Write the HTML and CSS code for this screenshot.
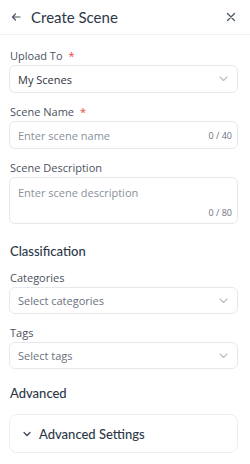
FILE: index.html
```html
<!DOCTYPE html>
<html>
<head>
    <link rel="stylesheet" href="styles.css">
</head>
<body>
    <div class="panel-header">
        <svg class="back-icon" width="10" height="10" viewBox="0 0 10 10"><path d="M9 5H1.5M4.5 2L1.5 5l3 3" fill="none" stroke="#4b5563" stroke-width="1.2" stroke-linecap="round" stroke-linejoin="round"/></svg>
        <h1>Create Scene</h1>
        <svg class="close-icon" width="10" height="10" viewBox="0 0 10 10"><path d="M1.5 1.5l7 7M8.5 1.5l-7 7" fill="none" stroke="#4b5563" stroke-width="1.3" stroke-linecap="round"/></svg>
    </div>
    <div class="form">
        <div class="field">
            <label>Upload To <span class="req">*</span></label>
            <div class="select">
                <span class="value">My Scenes</span>
                <svg class="chev" width="9" height="6" viewBox="0 0 9 6"><path d="M1 1l3.5 3.5L8 1" fill="none" stroke="#b8bdc5" stroke-width="1.1" stroke-linecap="round" stroke-linejoin="round"/></svg>
            </div>
        </div>
        <div class="field">
            <label>Scene Name <span class="req">*</span></label>
            <div class="input">
                <span class="placeholder">Enter scene name</span>
                <span class="counter">0 / 40</span>
            </div>
        </div>
        <div class="field">
            <label>Scene Description</label>
            <div class="textarea">
                <span class="placeholder">Enter scene description</span>
                <span class="counter">0 / 80</span>
            </div>
        </div>

        <h2 class="section-title">Classification</h2>
        <div class="field">
            <label>Categories</label>
            <div class="select small">
                <span class="placeholder">Select categories</span>
                <svg class="chev" width="9" height="6" viewBox="0 0 9 6"><path d="M1 1l3.5 3.5L8 1" fill="none" stroke="#b8bdc5" stroke-width="1.1" stroke-linecap="round" stroke-linejoin="round"/></svg>
            </div>
        </div>
        <div class="field">
            <label>Tags</label>
            <div class="select small">
                <span class="placeholder">Select tags</span>
                <svg class="chev" width="9" height="6" viewBox="0 0 9 6"><path d="M1 1l3.5 3.5L8 1" fill="none" stroke="#b8bdc5" stroke-width="1.1" stroke-linecap="round" stroke-linejoin="round"/></svg>
            </div>
        </div>

        <h2 class="section-title advanced">Advanced</h2>
        <div class="collapse">
            <svg width="8" height="6" viewBox="0 0 8 6"><path d="M1 1.5l3 3 3-3" fill="none" stroke="#374151" stroke-width="1.2" stroke-linecap="round" stroke-linejoin="round"/></svg>
            <span>Advanced Settings</span>
        </div>
    </div>
</body>
</html>
```

FILE: styles.css
```css
body {
    margin: 0;
    font-family: "Open Sans", sans-serif;
    background: #fff;
    color: #374151;
}
.panel-header {
    display: flex;
    align-items: center;
    height: 34px;
    padding: 0 14px 0 11px;
    border-bottom: 1px solid #f0f1f3;
}
.panel-header h1 {
    flex: 1;
    margin: 0 0 0 10px;
    font-family: "Lato", sans-serif;
    font-size: 15px;
    font-weight: 400;
    color: #2d3748;
}
.form {
    padding: 13px 12px 0 9px;
}
.field {
    margin-bottom: 11px;
}
.field label {
    display: block;
    font-size: 11px;
    line-height: 16px;
    margin: 0 0 1px 1px;
    color: #4b5260;
}
.req {
    color: #ef4444;
    margin-left: 3px;
}
.select,
.input {
    display: flex;
    align-items: center;
    height: 28px;
    box-sizing: border-box;
    padding: 0 9px 0 8px;
    border: 1px solid #e6e8eb;
    border-radius: 6px;
    font-size: 11px;
}
.select.small {
    height: 27px;
}
.select .value {
    flex: 1;
    color: #2f3540;
}
.placeholder {
    flex: 1;
    color: #8a919c;
}
.select .placeholder {
    color: #6b7280;
}
.input {
    padding-right: 5px;
}
.counter {
    font-size: 9px;
    color: #6b7280;
}
.textarea {
    display: flex;
    flex-direction: column;
    height: 47px;
    box-sizing: border-box;
    padding: 7px 5px 4px 8px;
    border: 1px solid #e6e8eb;
    border-radius: 6px;
    font-size: 11px;
}
.textarea .counter {
    align-self: flex-end;
}
.section-title {
    margin: 18px 0 10px 1px;
    font-family: "Lato", sans-serif;
    font-size: 13px;
    line-height: 18px;
    font-weight: 500;
    color: #2d3748;
}
.section-title.advanced {
    margin: 15px 0 12px 1px;
}
.collapse {
    display: flex;
    align-items: center;
    gap: 8px;
    height: 39px;
    box-sizing: border-box;
    padding: 0 12px 0 13px;
    border: 1px solid #eceef1;
    border-radius: 8px;
    font-family: "Lato", sans-serif;
    font-size: 13px;
    font-weight: 500;
    color: #2d3748;
}
```
